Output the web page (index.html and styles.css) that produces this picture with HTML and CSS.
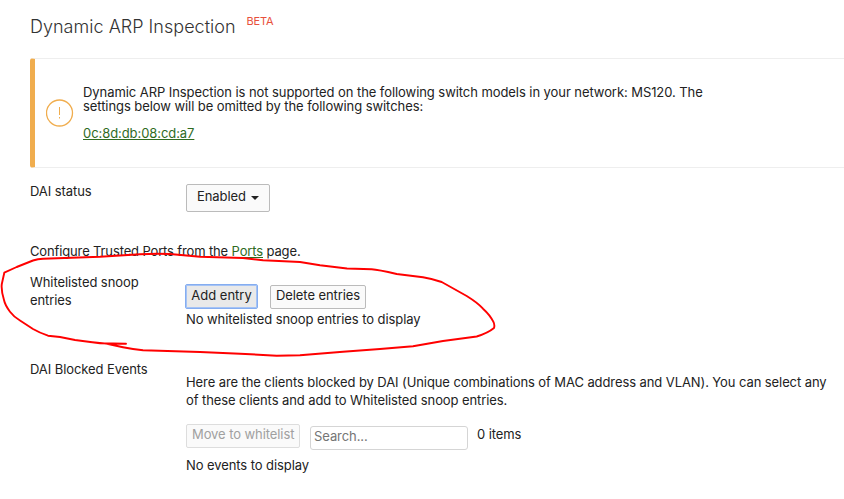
FILE: index.html
```
<!DOCTYPE html>
<html lang="en">
<head>
    <meta charset="UTF-8">
    <meta name="viewport" content="width=device-width, initial-scale=1.0">
    <title>Dynamic ARP Inspection</title>
    <link rel="stylesheet" href="styles.css">
</head>
<body>
    <div class="page">
        <h1 class="title">Dynamic ARP Inspection <sup class="beta">BETA</sup></h1>

        <div class="alert">
            <svg class="alert-icon" width="28" height="28" viewBox="0 0 28 28">
                <circle cx="13.5" cy="14" r="13" fill="none" stroke="#f0ad4e" stroke-width="1.3"/>
                <path d="M13.5 8v8M13.5 18v1.5" stroke="#f0ad4e" stroke-width="1"/>
            </svg>
            <div class="alert-body">
                <p class="alert-text">Dynamic ARP Inspection is not supported on the following switch models in your network: MS120. The<br>settings below will be omitted by the following switches:</p>
                <a href="#" class="link">0c:8d:db:08:cd:a7</a>
            </div>
        </div>

        <div class="row row-status">
            <div class="label">DAI status</div>
            <button class="dropdown">Enabled<span class="caret"></span></button>
        </div>

        <p class="trusted">Configure Trusted Ports from the <a href="#" class="link">Ports</a> page.</p>

        <div class="row row-snoop">
            <div class="label">Whitelisted snoop<br>entries</div>
            <div class="content">
                <div class="buttons">
                    <button class="button focused">Add entry</button>
                    <button class="button delete">Delete entries</button>
                </div>
                <p class="empty">No whitelisted snoop entries to display</p>
            </div>
        </div>

        <div class="row row-events">
            <div class="label">DAI Blocked Events</div>
            <div class="content">
                <p class="description">Here are the clients blocked by DAI (Unique combinations of MAC address and VLAN). You can select any<br>of these clients and add to Whitelisted snoop entries.</p>
                <div class="toolbar">
                    <button class="button move" disabled>Move to whitelist</button>
                    <input class="search" type="text" placeholder="Search...">
                    <span class="count">0 items</span>
                </div>
                <p class="no-events">No events to display</p>
            </div>
        </div>
    </div>

    <!-- hand-drawn marker around the snoop entries -->
    <svg class="marker" width="844" height="499" viewBox="0 0 844 499">
        <path d="M126 343.7L100 343.3L75 340L60 337L48 335.7Q40 333 33 329L20 320.5Q14 317 10 311.7Q5 305 4 300Q1 290 1.8 284L4.3 272.7L16.7 267L33 260.5Q38 259 43 258.7L100 256.7L140 254.3Q155 253.3 170 254L200 256.7L243 258L263 260.3L300 262L320 265.3L347 268.5L371.7 269.3Q378 269.7 396.7 274L423 277.3Q433 279 441.7 282L466.7 296Q478 303 483 308.7Q490 315 493.3 321.7Q495 325 494 328Q488 333 476.7 336.5L443 341L413 346.3L380 349L343 351.7L300 355.3L276.7 355.7L240 353.7L200 352L143 350.3Q133 349.5 123 347.3L107 343.8L90 342"/>
    </svg>
</body>
</html>
```
FILE: styles.css
```
body {
    margin: 0;
    background: #fff;
    color: #222;
    font-family: Inter, "Liberation Sans", sans-serif;
    font-size: 13px;
    line-height: 18px;
    letter-spacing: -0.08px;
    overflow: hidden;
}

p {
    margin: 0;
}

button,
input {
    font: inherit;
    color: inherit;
    letter-spacing: inherit;
    box-sizing: border-box;
}

.page {
    padding: 14px 0 0 30px;
    white-space: nowrap;
}

.title {
    display: flex;
    gap: 11px;
    margin: 0;
    height: 44px;
    font-size: 18px;
    font-weight: 300;
    line-height: 26px;
    letter-spacing: 0.02px;
    color: #333;
}

.beta {
    font-size: 11px;
    font-weight: 400;
    line-height: 14px;
    letter-spacing: -0.2px;
    color: #e8503c;
}

.alert {
    display: flex;
    align-items: center;
    box-sizing: border-box;
    height: 110px;
    padding-left: 11px;
    border: 1px solid #eee;
    border-left: 5px solid #f0ad4e;
    border-right: none;
    border-radius: 3px 0 0 3px;
}

.alert-body {
    margin: -2px 0 0 9px;
    line-height: 14px;
    letter-spacing: -0.07px;
}

.alert-text {
    margin-bottom: 13px;
}

.link {
    color: #2f6b1f;
    text-decoration: underline;
}

.row {
    display: flex;
}

.label {
    width: 156px;
    flex-shrink: 0;
}

.row-status {
    height: 60px;
    padding-top: 14px;
}

.dropdown {
    display: flex;
    align-items: center;
    width: 84px;
    height: 28px;
    margin-top: 2px;
    padding: 0 0 4px 10px;
    background: #fafafa;
    border: 1px solid #bbb;
    border-radius: 2px;
}

.caret {
    margin: 4px 0 0 5px;
    border: 4px solid transparent;
    border-top-color: #222;
    border-bottom: none;
}

.trusted {
    letter-spacing: -0.14px;
}

.row-snoop {
    padding-top: 13px;
    height: 74px;
}

.buttons {
    display: flex;
    gap: 12px;
    padding-top: 12px;
}

.button {
    height: 24px;
    padding: 0 5px 4px;
    background: #fafafa;
    border: 1px solid #bbb;
    border-radius: 2px;
    line-height: 18px;
}

.focused {
    width: 73px;
    height: 25px;
    margin: -1px 0 0 -1px;
    background: #e9e9e9;
    border-color: #85adf0;
    box-shadow: inset 0 0 0 1px #a5c3f5;
    letter-spacing: 0;
}

.delete {
    width: 96px;
}

.empty {
    padding-top: 1px;
}

.row-events {
    padding-top: 13px;
}

.description {
    padding-top: 13px;
    letter-spacing: -0.09px;
}

.toolbar {
    display: flex;
    margin-top: 15px;
}

.move {
    width: 114px;
    border-color: #ddd;
    color: #a0a0a0;
}

.search {
    width: 158px;
    height: 24px;
    margin: 2px 9px 0 10px;
    padding: 0 3px 4px;
    background: #fff;
    border: 1px solid #d5d5d5;
    border-radius: 3px;
}

.search::placeholder {
    color: #757575;
}

.count {
    line-height: 20px;
}

.no-events {
    padding-top: 6px;
}

.marker {
    position: absolute;
    top: 0;
    left: 0;
    pointer-events: none;
}

.marker path {
    fill: none;
    stroke: #f00;
    stroke-width: 1.9;
    stroke-linejoin: round;
    stroke-linecap: round;
}
```
